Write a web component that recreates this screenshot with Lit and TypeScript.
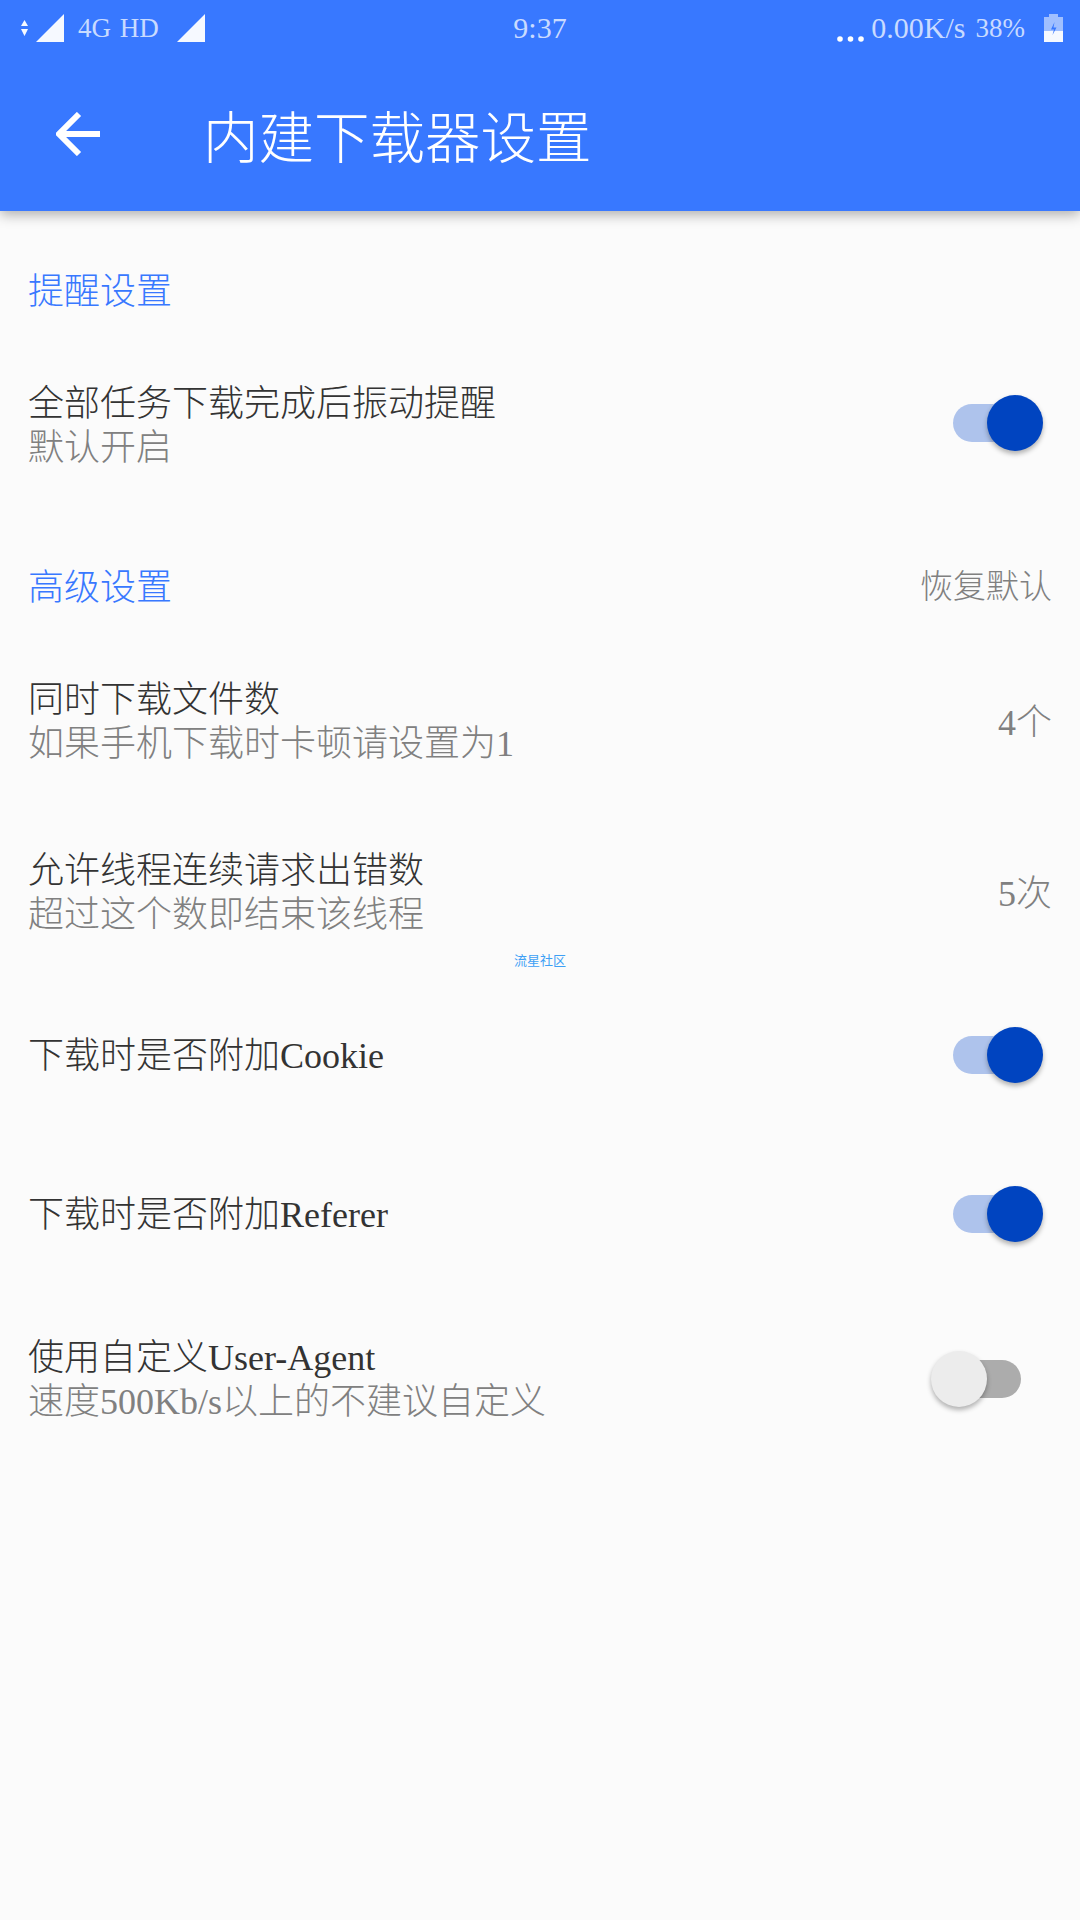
import { LitElement, html, css } from 'lit';
import { customElement } from 'lit/decorators.js';

interface SettingRow {
  title: string;
  sub?: string;
  value?: string;
  toggle?: boolean;
}

const REMIND_ROWS: SettingRow[] = [
  { title: '全部任务下载完成后振动提醒', sub: '默认开启', toggle: true },
];

const ADVANCED_ROWS: SettingRow[] = [
  { title: '同时下载文件数', sub: '如果手机下载时卡顿请设置为1', value: '4个' },
  { title: '允许线程连续请求出错数', sub: '超过这个数即结束该线程', value: '5次' },
  { title: '下载时是否附加Cookie', toggle: true },
  { title: '下载时是否附加Referer', toggle: true },
  { title: '使用自定义User-Agent', sub: '速度500Kb/s以上的不建议自定义', toggle: false },
];

@customElement('app-root')
export class AppRoot extends LitElement {
  static styles = css`
    :host {
      display: block;
      position: relative;
      min-height: 1920px;
      background: #fbfbfb;
      font-family: 'Liberation Serif', 'Noto Sans CJK SC', serif;
      font-weight: 300;
      color: #333;
    }

    /* 顶部区域 */
    .header {
      background: #3878ff;
      height: 211px;
      box-shadow: 0 4px 12px rgba(0, 0, 0, 0.3);
    }

    .status-bar {
      height: 60px;
      box-sizing: border-box;
      display: grid;
      grid-template-columns: 1fr auto 1fr;
      align-items: center;
      padding: 0 17px 4px;
      font-size: 30px;
      color: #c9dbff;
    }

    .status-left,
    .status-right {
      display: flex;
      align-items: center;
    }

    .status-right {
      justify-content: flex-end;
    }

    .status-bar svg {
      display: block;
    }

    .net-type {
      font-size: 27px;
      margin: 0 18px 0 14px;
      word-spacing: 2px;
    }

    .arrows {
      margin: 0 8px 0 4px;
    }

    .dots {
      margin: 22px 7px 0 0;
    }

    .speed {
      margin-right: 10px;
    }

    .battery-level {
      margin-right: 19px;
      font-size: 27px;
    }

    .toolbar {
      height: 151px;
      box-sizing: border-box;
      display: flex;
      align-items: center;
      padding: 0 0 4px 56px;
    }

    .toolbar svg {
      display: block;
      flex: none;
      margin-right: 103px;
    }

    .toolbar-title {
      font-size: 55.5px;
      color: #fff;
    }

    /* 设置列表 */
    .section-head {
      height: 94px;
      box-sizing: border-box;
      margin-top: 32px;
      display: flex;
      align-items: center;
      justify-content: space-between;
      padding: 0 28px 5px;
      font-size: 36px;
      color: #3878ff;
    }

    .section-head.next {
      margin-top: 31px;
    }

    .section-action {
      font-size: 33px;
      color: #808080;
    }

    .row {
      min-height: 159px;
      box-sizing: border-box;
      display: flex;
      align-items: center;
      justify-content: space-between;
      padding: 0 28px;
    }

    .row-text {
      padding-top: 3px;
    }

    .row.double {
      min-height: 171px;
    }

    .row.double .row-text {
      padding-top: 7px;
    }

    .row.double:nth-last-child(2) .row-text {
      padding-top: 3px;
    }

    .row-title {
      font-size: 36px;
      line-height: 43px;
      color: #333;
    }

    .row-sub {
      font-size: 36px;
      line-height: 44px;
      color: #808080;
    }

    .row-value {
      font-size: 36px;
      color: #808080;
    }

    .switch {
      position: relative;
      flex: none;
      width: 68px;
      height: 38px;
      margin-right: 31px;
      border-radius: 19px;
      background: #acacac;
    }

    .switch.on {
      background: #aec3ec;
    }

    .thumb {
      position: absolute;
      top: -9px;
      left: -22px;
      width: 56px;
      height: 56px;
      border-radius: 50%;
      background: #ececec;
      box-shadow: 0 3px 5px rgba(0, 0, 0, 0.3);
    }

    .switch.on .thumb {
      left: 34px;
      background: #0044c0;
    }

    /* 图片水印 */
    .watermark {
      position: absolute;
      left: 514px;
      top: 952px;
      font-family: 'Noto Sans CJK SC', sans-serif;
      font-weight: 400;
      font-size: 13px;
      line-height: 16px;
      color: #3ea0f5;
    }
  `;

  private renderRow(row: SettingRow) {
    return html`
      <div class="row ${row.sub ? 'double' : ''}">
        <div class="row-text">
          <div class="row-title">${row.title}</div>
          ${row.sub ? html`<div class="row-sub">${row.sub}</div>` : ''}
        </div>
        ${row.value ? html`<div class="row-value">${row.value}</div>` : ''}
        ${row.toggle !== undefined
          ? html`<div class="switch ${row.toggle ? 'on' : ''}"><div class="thumb"></div></div>`
          : ''}
      </div>
    `;
  }

  private signal() {
    return html`<svg width="28" height="28" viewBox="0 0 28 28"><path d="M0 28 28 0v28z" fill="#f6f9ff" /></svg>`;
  }

  render() {
    return html`
      <div class="header">
        <div class="status-bar">
          <div class="status-left">
            <svg class="arrows" width="7" height="16" viewBox="0 0 7 16">
              <path d="M3.500 0 7 6H0zM0 9h7l-3.500 7z" fill="#f6f9ff" />
            </svg>
            ${this.signal()}
            <span class="net-type">4G HD</span>
            ${this.signal()}
          </div>
          <div>9:37</div>
          <div class="status-right">
            <svg class="dots" width="27" height="8" viewBox="0 0 27 8">
              <circle cx="3" cy="4" r="2.800" fill="#fff" />
              <circle cx="13.500" cy="4" r="2.800" fill="#fff" />
              <circle cx="24" cy="4" r="2.800" fill="#fff" />
            </svg>
            <span class="speed">0.00K/s</span>
            <span class="battery-level">38%</span>
            <svg width="19" height="28" viewBox="0 0 19 28">
              <path d="M5 0h9v3h5v14H0V3h5z" fill="#a0bfff" />
              <path d="M0 17h19v11H0z" fill="#f6f9ff" />
              <path d="M10.500 8 7 15.500h3L8.500 21 12.500 13.500h-3z" fill="#3878ff" />
            </svg>
          </div>
        </div>
        <div class="toolbar">
          <svg width="44" height="44" viewBox="0 0 44 44">
            <path d="M44 22H4M23 2 3 22l20 20" fill="none" stroke="#fff" stroke-width="6" />
          </svg>
          <div class="toolbar-title">内建下载器设置</div>
        </div>
      </div>

      <div class="section-head">提醒设置</div>
      ${REMIND_ROWS.map((row) => this.renderRow(row))}

      <div class="section-head next">
        <span>高级设置</span>
        <span class="section-action">恢复默认</span>
      </div>
      ${ADVANCED_ROWS.map((row) => this.renderRow(row))}

      <div class="watermark">流星社区</div>
    `;
  }
}
